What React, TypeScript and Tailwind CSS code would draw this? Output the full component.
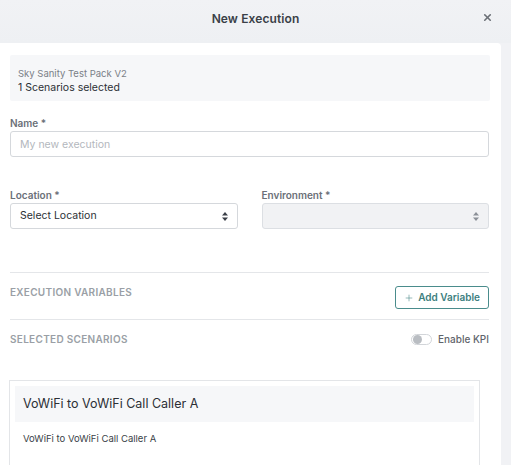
import { Plus, X } from 'lucide-react';

const font = { fontFamily: 'Inter, "Noto Sans", sans-serif' };

function SelectArrows({ className }: { className?: string }) {
  return (
    <svg width="6" height="9" viewBox="0 0 6 9" className={className}>
      <path d="M3 0 L6 3.5 H0 Z" fill="currentColor" />
      <path d="M3 9 L6 5.5 H0 Z" fill="currentColor" />
    </svg>
  );
}

export default function App() {
  return (
    <div className="w-[511px] h-[465px] overflow-hidden bg-[#f1f2f5] flex flex-col" style={font}>
      {/* header */}
      <div className="h-[43px] shrink-0 flex items-center justify-center relative bg-gradient-to-b from-[#f1f2f5] to-[#eef0f3]">
        <h1 className="text-[12px] font-semibold text-[#3a3f47] tracking-[0.1px] mb-[6px]">New Execution</h1>
        <button className="absolute right-[18px] top-[12px] text-[#6b6f76]">
          <X className="w-[11px] h-[11px]" strokeWidth={3.5} />
        </button>
      </div>

      <div className="flex flex-1 min-h-0">
        <div className="w-[501px] bg-white rounded-tr-[4px] px-[10px] pt-[12px] flex flex-col">
          {/* pack info */}
          <div className="bg-[#f6f7f9] rounded-[2px] px-[8px] pt-[12px] pb-[6px] mr-[1px]">
            <div className="text-[9.5px] text-[#7a7f87] leading-[13px]">Sky Sanity Test Pack V2</div>
            <div className="text-[10.5px] text-[#2b2f35] leading-[15px]">1 Scenarios selected</div>
          </div>

          {/* name */}
          <label className="mt-[15px] text-[10px] font-semibold text-[#6b7078] leading-[14px]">Name *</label>
          <input
            className="mt-[1px] h-[26px] w-[479px] border border-[#d5d8dc] rounded-[3px] px-[9px] text-[10.5px] text-[#2b2f35] placeholder:text-[#b3b7bd] outline-none"
            placeholder="My new execution"
          />

          {/* location / environment */}
          <div className="mt-[31px] grid grid-cols-2 gap-x-[24px] w-[479px]">
            <div className="flex flex-col">
              <label className="text-[10px] font-semibold text-[#6b7078] leading-[14px]">Location *</label>
              <div className="mt-[1px] h-[26px] border border-[#d5d8dc] rounded-[3px] px-[9px] flex items-center justify-between text-[10.5px] text-[#2b2f35]">
                <span>Select Location</span>
                <SelectArrows className="text-[#3a3f47]" />
              </div>
            </div>
            <div className="flex flex-col">
              <label className="text-[10px] font-semibold text-[#6b7078] leading-[14px]">Environment *</label>
              <div className="mt-[1px] h-[26px] border border-[#dcdfe3] bg-[#f1f2f4] rounded-[3px] px-[9px] flex items-center justify-end">
                <SelectArrows className="text-[#8b9097]" />
              </div>
            </div>
          </div>

          {/* execution variables */}
          <div className="mt-[43px] border-t border-[#e4e6e9] w-[479px] flex items-start justify-between pt-[12px] pb-[10px]">
            <span className="text-[10px] font-semibold text-[#9a9fa6] tracking-[0.3px] leading-[14px]">EXECUTION VARIABLES</span>
            <button className="mt-[1px] h-[23px] px-[8px] border border-[#4a8c8c] rounded-[3px] flex items-center gap-[4px] text-[10px] font-semibold text-[#3d7f80]">
              <Plus className="w-[10px] h-[10px]" strokeWidth={1.3} />
              Add Variable
            </button>
          </div>

          {/* selected scenarios */}
          <div className="border-t border-[#e4e6e9] w-[479px] flex items-center justify-between pt-[12px]">
            <span className="text-[10px] font-semibold text-[#9a9fa6] tracking-[0.3px]">SELECTED SCENARIOS</span>
            <div className="flex items-center gap-[6px]">
              <span className="w-[21px] h-[11px] rounded-full border border-[#d2d5d9] bg-white flex items-center px-[1px]">
                <span className="w-[9px] h-[9px] rounded-full bg-[#b9bdc2]" />
              </span>
              <span className="text-[10px] font-medium text-[#5f646b]">Enable KPI</span>
            </div>
          </div>

          {/* scenario card */}
          <div className="mt-[33px] ml-[-1px] w-[471px] border border-[#e3e5e8] border-b-0 px-[5px] pt-[5px] flex-1">
            <div className="bg-[#f6f7f9] h-[36px] flex items-center px-[8px] text-[12.5px] text-[#2b2f35]">
              VoWiFi to VoWiFi Call Caller A
            </div>
            <div className="px-[8px] pt-[10px] text-[9.5px] text-[#3a3f47]">VoWiFi to VoWiFi Call Caller A</div>
          </div>
        </div>
        <div className="flex-1 bg-[#f1f2f5]" />
      </div>
    </div>
  );
}
